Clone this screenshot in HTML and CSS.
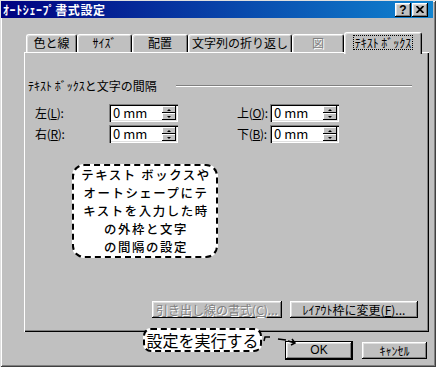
FILE: index.html
```html
<!DOCTYPE html>
<html lang="ja">
<head>
  <meta charset="UTF-8" />
  <title>オートシェープ書式設定</title>
  <link rel="stylesheet" href="styles.css">
</head>
<body>
  <div class="window">
    <div class="titlebar">
      <span class="title">ｵｰﾄｼｪｰﾌﾟ書式設定</span>
      <div class="title-buttons">
        <button class="tb-btn help">?</button>
        <button class="tb-btn">
          <svg width="8" height="7" viewBox="0 0 8 7"><path d="M0.5 0 L7.5 7 M7.5 0 L0.5 7" stroke="#000" stroke-width="1.8"/></svg>
        </button>
      </div>
    </div>

    <div class="content">
      <div class="tabs">
        <div class="tab">色と線</div>
        <div class="tab">ｻｲｽﾞ</div>
        <div class="tab">配置</div>
        <div class="tab">文字列の折り返し</div>
        <div class="tab disabled">図</div>
        <div class="tab active"><span class="focus">ﾃｷｽﾄ ﾎﾞｯｸｽ</span></div>
      </div>

      <div class="panel">
        <div class="group-head">
          <span>ﾃｷｽﾄ ﾎﾞｯｸｽと文字の間隔</span>
          <span class="etched"></span>
        </div>

        <div class="fields">
          <label>左(<u>L</u>):</label>
          <div class="spin"><span class="spin-value">0 mm</span><span class="spin-arrows"><i class="up"></i><i class="down"></i></span></div>
          <label>上(<u>O</u>):</label>
          <div class="spin"><span class="spin-value">0 mm</span><span class="spin-arrows"><i class="up"></i><i class="down"></i></span></div>
          <label>右(<u>R</u>):</label>
          <div class="spin"><span class="spin-value">0 mm</span><span class="spin-arrows"><i class="up"></i><i class="down"></i></span></div>
          <label>下(<u>B</u>):</label>
          <div class="spin"><span class="spin-value">0 mm</span><span class="spin-arrows"><i class="up"></i><i class="down"></i></span></div>
        </div>

        <div class="note">
          テキスト ボックスや<br>
          オートシェープにテ<br>
          キストを入力した時<br>
          の外枠と文字<br>
          の間隔の設定
        </div>

        <div class="panel-buttons">
          <button class="btn btn-callout" disabled>引き出し線の書式(<u>C</u>)...</button>
          <button class="btn btn-frame">ﾚｲｱｳﾄ枠に変更(<u>F</u>)...</button>
        </div>
      </div>

      <div class="dialog-buttons">
        <button class="btn btn-ok">OK</button>
        <button class="btn btn-cancel">ｷｬﾝｾﾙ</button>
      </div>
    </div>

    <!-- annotation over the dialog -->
    <div class="hint">設定を実行する</div>
    <svg class="pointer" width="36" height="14" viewBox="0 0 36 14">
      <path d="M2 7 L3 3 L8 3" fill="none" stroke="#000" stroke-width="1.5"/>
      <path d="M16 5 L24 6" fill="none" stroke="#000" stroke-width="1.5"/>
      <path d="M26 7 L33 9 M30 5 L33 9 L29 11" fill="none" stroke="#000" stroke-width="1.5"/>
    </svg>
  </div>
</body>
</html>
```

FILE: styles.css
```css
* {
  box-sizing: border-box;
  margin: 0;
  padding: 0;
}

body {
  background: #c0c0c0;
  font-family: "Noto Sans CJK JP", sans-serif;
  font-size: 12px;
  line-height: 14px;
  color: #000;
}

.window {
  position: relative;
  width: 436px;
  height: 367px;
  padding: 1px 3px 3px 1px;
  background: #c0c0c0;
  box-shadow: inset 1px 1px #dfdfdf, inset -1px -1px #404040,
              inset 2px 2px #fff, inset -2px -2px #808080;
}

/* Title bar */
.titlebar {
  display: flex;
  justify-content: space-between;
  align-items: center;
  height: 17px;
  padding: 0 5px 0 2px;
  background: linear-gradient(to right, #000080, #1084d0);
  color: #fff;
  font-weight: bold;
}

.title {
  letter-spacing: 0.6px;
}

.title-buttons {
  display: flex;
  gap: 1px;
}

.tb-btn {
  display: flex;
  justify-content: center;
  align-items: center;
  width: 16px;
  height: 14px;
  border: none;
  background: #c0c0c0;
  box-shadow: inset -1px -1px #000, inset 1px 1px #fff,
              inset -2px -2px #808080, inset 2px 2px #dfdfdf;
}

.tb-btn.help {
  font-family: "Liberation Sans", sans-serif;
  font-weight: bold;
  font-size: 12px;
  line-height: 12px;
}

/* Tabs */
.content {
  padding: 14px 4px 0 23px;
}

.tabs {
  display: grid;
  grid-template-columns: 51px 55px 56px 104px 52px 78px;
  align-items: end;
  height: 20px;
  margin-left: 2px;
}

.tab {
  height: 18px;
  text-align: center;
  line-height: 16px;
  white-space: nowrap;
  background: #c0c0c0;
  border: 1px solid;
  border-color: #fff #000 transparent #fff;
  border-bottom: none;
  border-radius: 3px 3px 0 0;
  box-shadow: inset 1px 1px #dfdfdf, inset -1px 0 #808080;
}

.tab.disabled {
  color: #808080;
  text-shadow: 1px 1px #fff;
}

.tab.active {
  position: relative;
  z-index: 1;
  height: 22px;
  margin-bottom: -2px;
  padding-top: 2px;
}

.tab .focus {
  display: inline-block;
  padding: 0 1px;
  outline: 1px dotted #000;
  line-height: 13px;
}

/* Panel */
.panel {
  display: flex;
  flex-direction: column;
  height: 280px;
  padding: 27px 0 14px 0;
  box-shadow: inset 1px 1px #fff, inset -1px -1px #000, inset -2px -2px #808080;
}

.group-head {
  display: flex;
  align-items: center;
  gap: 19px;
  padding: 0 17px 0 4px;
}

.etched {
  flex: 1;
  height: 2px;
  border-top: 1px solid #808080;
  border-bottom: 1px solid #fff;
}

.fields {
  display: grid;
  grid-template-columns: 74px 128px 33px 69px;
  row-gap: 3px;
  align-items: center;
  margin-top: 11px;
  padding-left: 11px;
}

.fields label {
  white-space: nowrap;
  letter-spacing: -0.3px;
}

.spin {
  display: flex;
  width: 69px;
  height: 18px;
  padding: 2px;
  background: #fff;
  box-shadow: inset 1px 1px #808080, inset 2px 2px #000,
              inset -1px -1px #fff, inset -2px -2px #dfdfdf;
}

.spin-value {
  flex: 1;
  padding-left: 2px;
  font-size: 13px;
  line-height: 14px;
}

.spin-arrows {
  display: flex;
  flex-direction: column;
  width: 14px;
}

.spin-arrows i {
  display: flex;
  flex: 1;
  justify-content: center;
  align-items: center;
  background: #c0c0c0;
  box-shadow: inset -1px -1px #000, inset 1px 1px #fff;
}

.spin-arrows i::after {
  content: "";
  border-left: 2px solid transparent;
  border-right: 2px solid transparent;
}

.spin-arrows .up::after {
  border-bottom: 2px solid #000;
}

.spin-arrows .down::after {
  border-top: 2px solid #000;
}

/* Callout inside the panel */
.note {
  width: 146px;
  margin: 21px 0 0 48px;
  padding-left: 2px;
  border: 2px dashed #000;
  border-radius: 12px;
  background: #fff;
  text-align: center;
  font-size: 12.4px;
  font-weight: 500;
  letter-spacing: 1.6px;
  line-height: 18px;
}

/* Buttons */
.btn {
  height: 17px;
  border: none;
  background: #c0c0c0;
  font-family: inherit;
  font-size: 12px;
  line-height: 13px;
  color: #000;
  white-space: nowrap;
  box-shadow: inset -1px -1px #000, inset 1px 1px #fff,
              inset -2px -2px #808080, inset 2px 2px #dfdfdf;
}

.btn:disabled {
  color: #808080;
  text-shadow: 1px 1px #fff;
}

.panel-buttons {
  display: flex;
  justify-content: flex-end;
  gap: 8px;
  margin-top: auto;
  padding-right: 11px;
}

.btn-callout {
  width: 130px;
}

.btn-frame {
  width: 128px;
}

.dialog-buttons {
  display: flex;
  justify-content: flex-end;
  gap: 10px;
  margin-top: 10px;
  padding-right: 2px;
}

.btn-ok {
  width: 66px;
  outline: 1px solid #000;
  font-family: "Liberation Sans", sans-serif;
}

.btn-cancel {
  width: 65px;
}

/* Annotation */
.hint {
  position: absolute;
  left: 143px;
  top: 328px;
  width: 119px;
  height: 24px;
  border: 2px dashed #000;
  border-radius: 8px;
  background: #fff;
  text-align: center;
  font-size: 16px;
  line-height: 20px;
}

.pointer {
  position: absolute;
  left: 262px;
  top: 334px;
}
```
